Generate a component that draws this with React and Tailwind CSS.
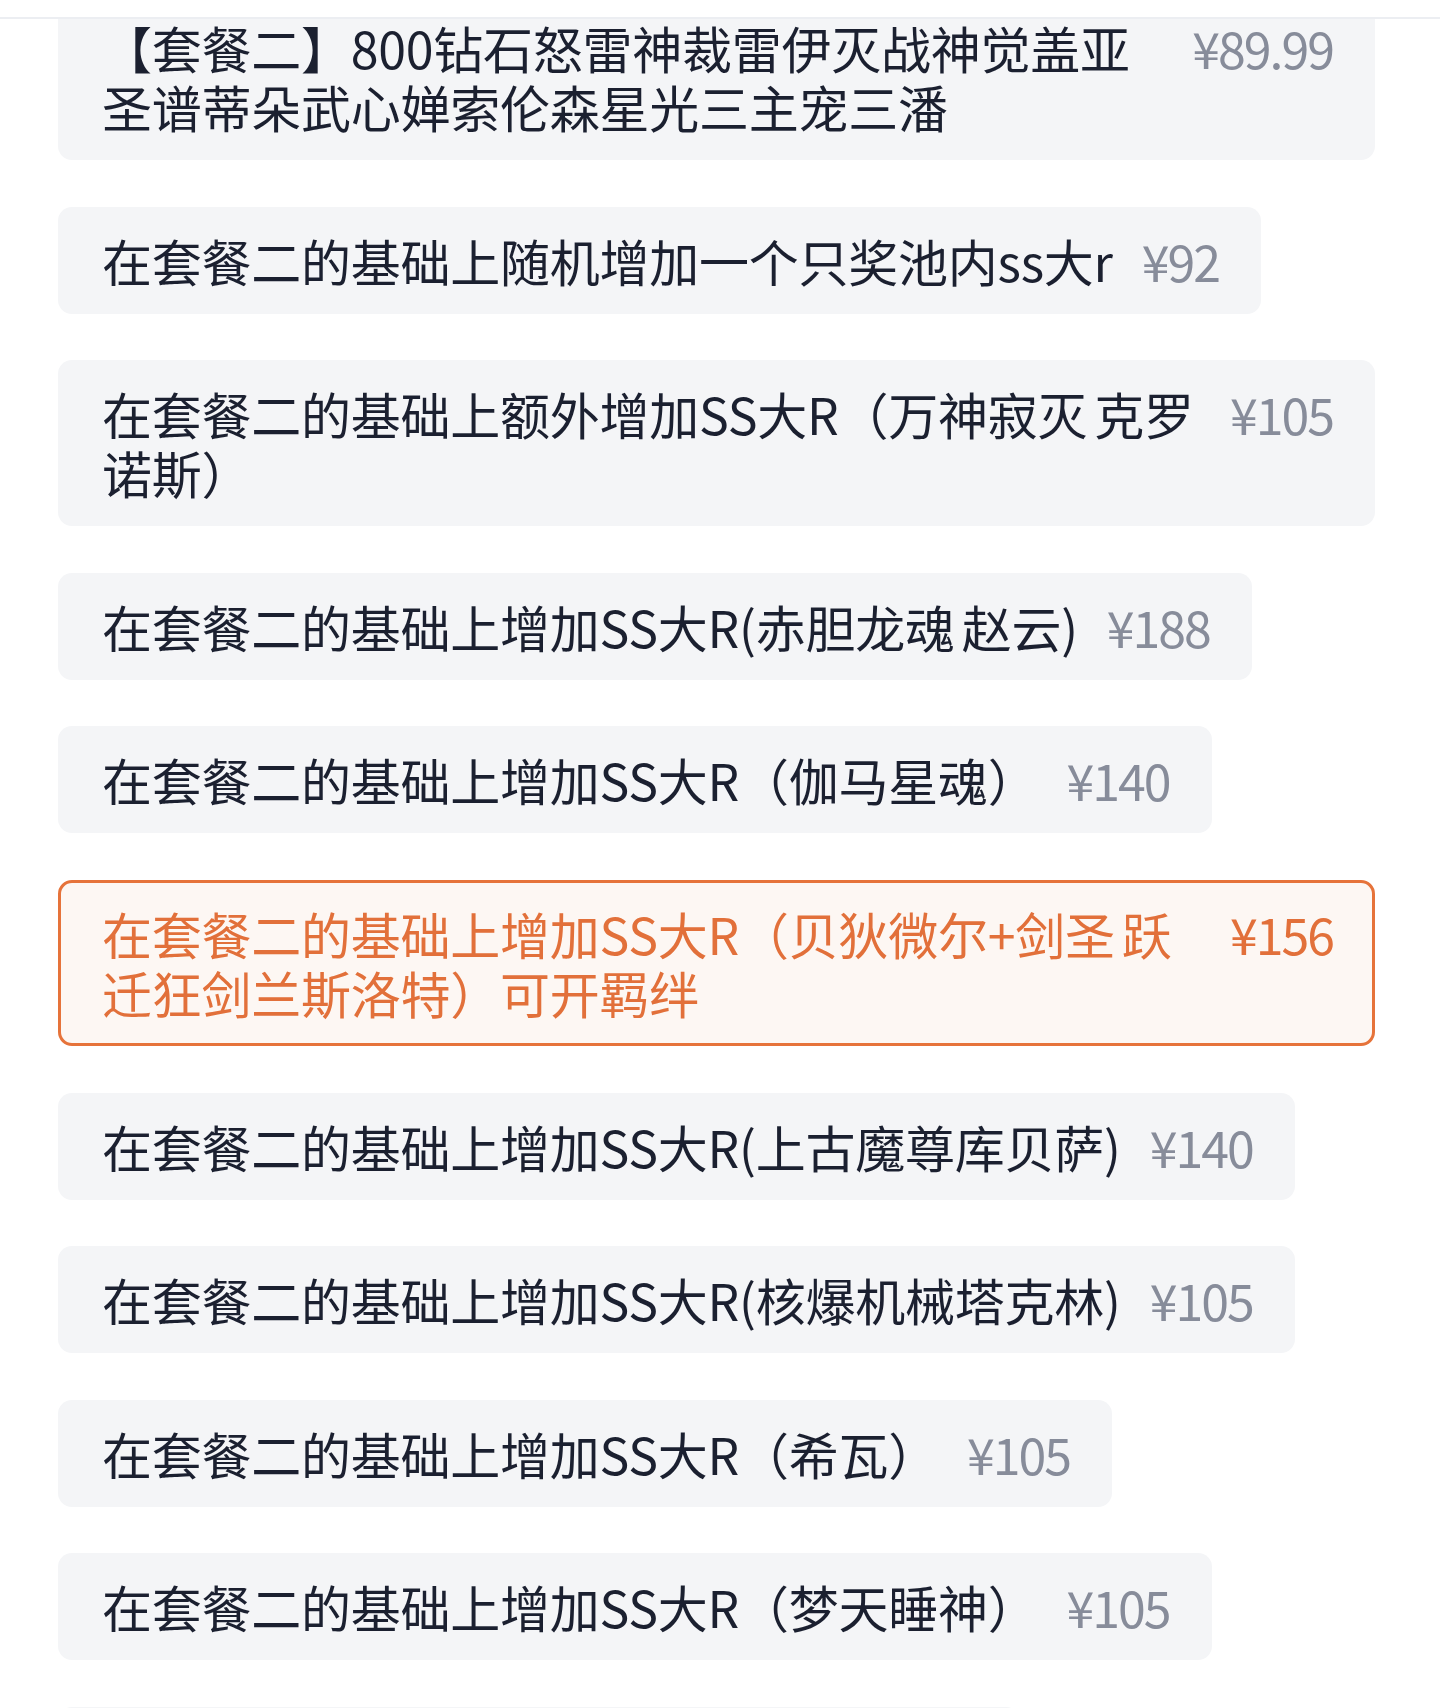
const items = [
  { id: 1, name: '【套餐二】800钻石怒雷神裁雷伊灭战神觉盖亚圣谱蒂朵武心婵索伦森星光三主宠三潘', price: '¥89.99' },
  { id: 2, name: '在套餐二的基础上随机增加一个只奖池内ss大r', price: '¥92' },
  { id: 3, name: '在套餐二的基础上额外增加SS大R（万神寂灭 克罗诺斯）', price: '¥105' },
  { id: 4, name: '在套餐二的基础上增加SS大R(赤胆龙魂 赵云)', price: '¥188' },
  { id: 5, name: '在套餐二的基础上增加SS大R（伽马星魂）', price: '¥140' },
  { id: 6, name: '在套餐二的基础上增加SS大R（贝狄微尔+剑圣 跃迁狂剑兰斯洛特）可开羁绊', price: '¥156', active: true },
  { id: 7, name: '在套餐二的基础上增加SS大R(上古魔尊库贝萨)', price: '¥140' },
  { id: 8, name: '在套餐二的基础上增加SS大R(核爆机械塔克林)', price: '¥105' },
  { id: 9, name: '在套餐二的基础上增加SS大R（希瓦）', price: '¥105' },
  { id: 10, name: '在套餐二的基础上增加SS大R（梦天睡神）', price: '¥105' },
  { id: 11, name: '在套餐二的基础上增加SS大R(魔神)', price: '¥99' },
];

function OptionCard({ item }) {
  const base = 'flex items-start gap-[29px] max-w-full rounded-[14px] leading-[59px] text-[50px]';
  const name = 'min-w-0 tracking-[-0.25px] [word-spacing:-4px]';
  const price = 'shrink-0 whitespace-nowrap proportional-nums tracking-[-2px]';
  if (item.active) {
    return (
      <div className={`${base} border-[3px] border-[#e6733a] bg-[#fdf7f3] pl-[41px] pr-[39px] py-[21px] text-[#e2703a]`}>
        <div className={name}>{item.name}</div>
        <div className={price}>{item.price}</div>
      </div>
    );
  }
  return (
    <div className={`${base} bg-[#f4f5f7] pl-[44px] pr-[42px] py-[24px] text-[#1b2030]`}>
      <div className={name}>{item.name}</div>
      <div className={`${price} text-[#878c9a]`}>{item.price}</div>
    </div>
  );
}

export default function App() {
  return (
    <div
      className="relative h-[1708px] w-[1440px] overflow-hidden bg-white"
      style={{ fontFamily: '"Noto Sans CJK SC", "Noto Sans", sans-serif' }}
    >
      {/* top bar covering the scrolled list */}
      <div className="absolute left-0 right-0 top-0 z-10 h-[19px] border-b-2 border-[#eceef2] bg-white" />

      {/* option list */}
      <div className="mt-[-6px] flex flex-col items-start gap-[46.6px] pl-[58px] pr-[65px]">
        {items.map((item) => (
          <OptionCard key={item.id} item={item} />
        ))}
      </div>
    </div>
  );
}
